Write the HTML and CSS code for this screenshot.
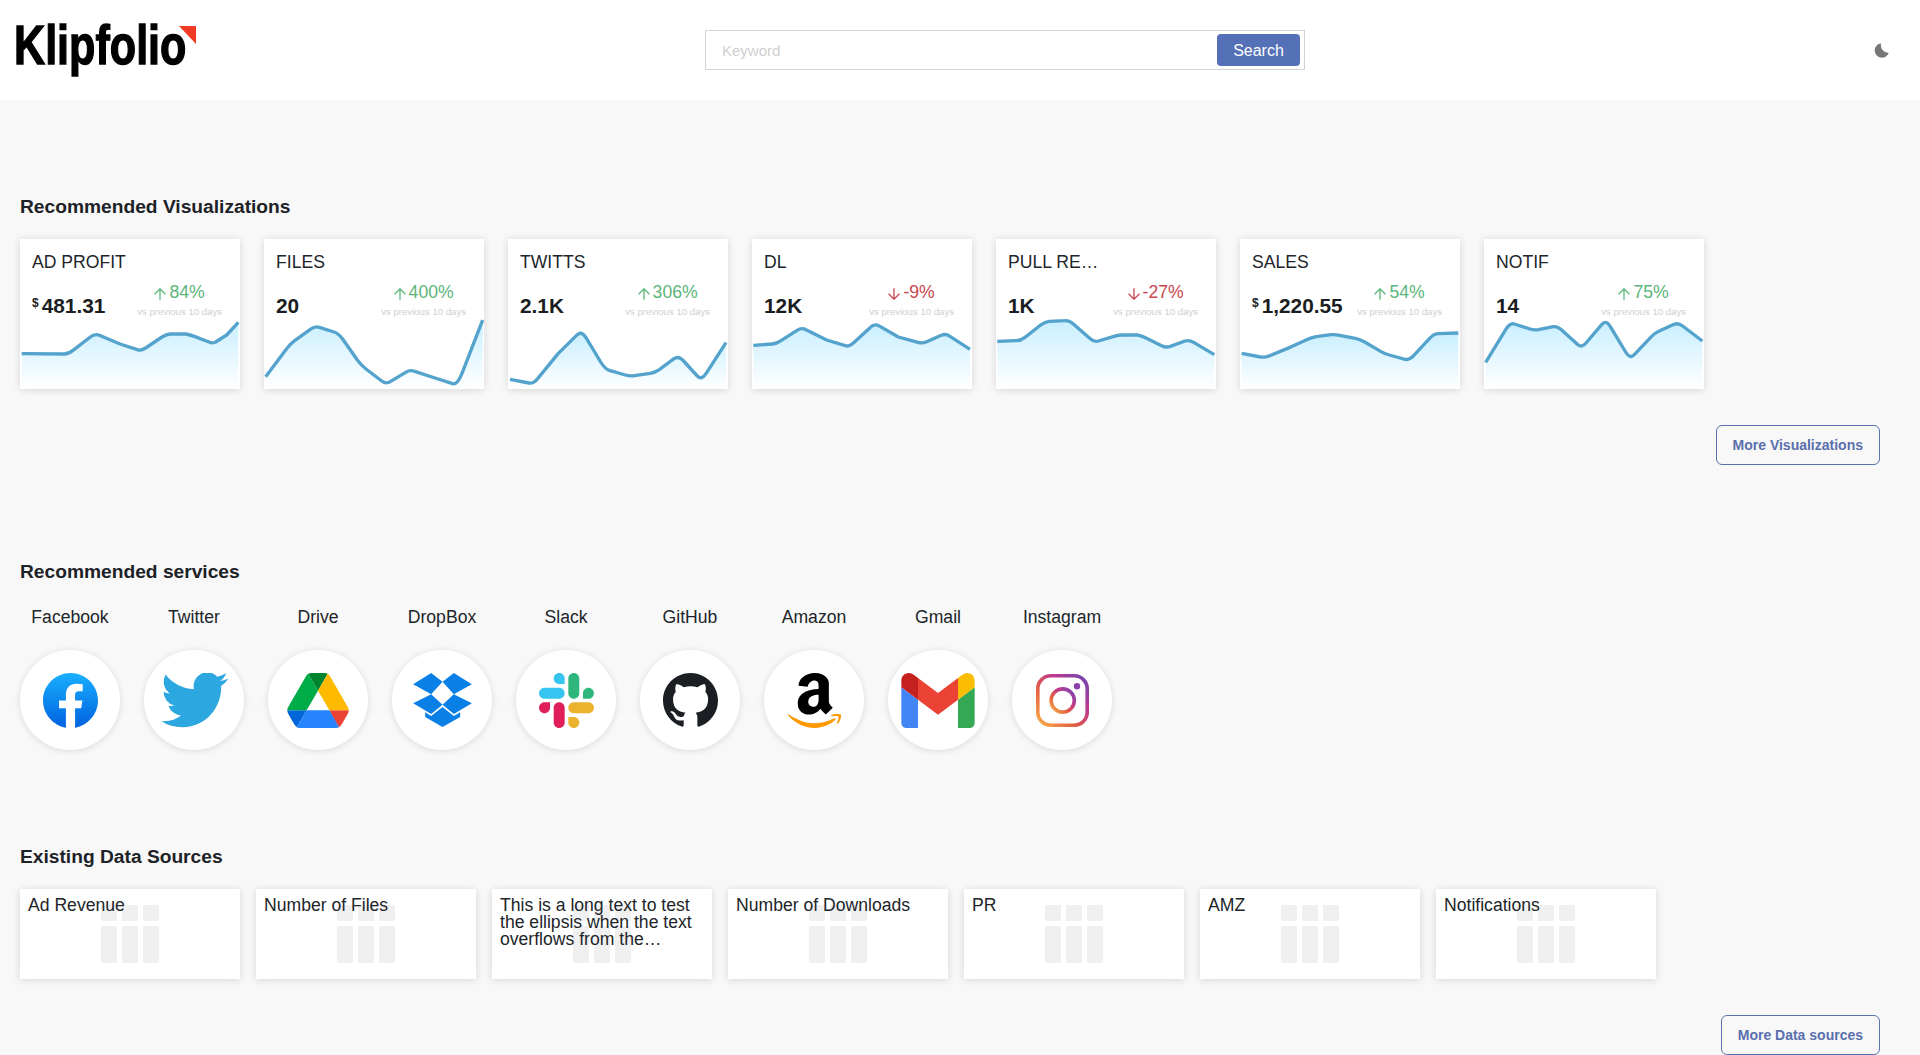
FILE: index.html
```html
<!DOCTYPE html>
<html lang="en">
<head>
<meta charset="utf-8">
<title>Klipfolio</title>
<link rel="stylesheet" href="styles.css">
</head>
<body>
<svg class="defs" width="0" height="0" aria-hidden="true">
  <defs>
    <linearGradient id="area" x1="0" y1="0" x2="0" y2="1">
      <stop offset="0" stop-color="#c9efff"/>
      <stop offset="1" stop-color="#ffffff"/>
    </linearGradient>
    <linearGradient id="fb" x1="0" y1="0" x2="0" y2="1">
      <stop offset="0" stop-color="#19afff"/>
      <stop offset="1" stop-color="#0062e0"/>
    </linearGradient>
    <linearGradient id="ig" x1="0" y1="1" x2="1" y2="0">
      <stop offset="0" stop-color="#f7b24a"/>
      <stop offset=".35" stop-color="#e5603f"/>
      <stop offset=".65" stop-color="#bf3a8c"/>
      <stop offset="1" stop-color="#6f45b5"/>
    </linearGradient>
    <symbol id="up" viewBox="0 0 12 12"><path d="M6 11.800V.8M.6 6.200 6 .8l5.400 5.400" fill="none" stroke="currentColor" stroke-width="1.300"/></symbol>
    <symbol id="down" viewBox="0 0 12 12"><path d="M6 .2V11.200M.6 5.800 6 11.200l5.400-5.400" fill="none" stroke="currentColor" stroke-width="1.300"/></symbol>
    <symbol id="bars" viewBox="0 0 58 58">
      <rect x="0" width="16" height="16" rx="1"/><rect x="21" width="16" height="16" rx="1"/><rect x="42" width="16" height="16" rx="1"/>
      <rect x="0" y="21" width="16" height="37" rx="1"/><rect x="21" y="21" width="16" height="37" rx="1"/><rect x="42" y="21" width="16" height="37" rx="1"/>
    </symbol>
  </defs>
</svg>

<header class="topbar">
  <a class="logo"><span class="logo-text">Klipfolio</span><svg class="logo-mark" viewBox="0 0 17 18"><path d="M0 0h17v18z"/></svg></a>
  <form class="search">
    <input class="search-input" type="text" placeholder="Keyword">
    <button class="search-btn" type="button">Search</button>
  </form>
  <svg class="moon" viewBox="0 0 16 16"><path d="M7.500.3A7.700 7.700 0 1 0 15.700 10.600 8.500 8.500 0 0 1 7.500.3z"/></svg>
</header>

<main class="page">
  <section class="section">
    <h2 class="section-title">Recommended Visualizations</h2>
    <div class="viz-row">
      <article class="viz-card">
        <svg class="spark" viewBox="60 147 660 450"><path class="spark-area" d="M65 491L193 492Q205 492 219 481L271 441Q285 430 298 436L360 462 412 479Q423 483 437 474L486 441Q500 432 513 432L557 432Q570 434 583 439L627 456Q640 461 647 456L680 435 715 397V597H65z"/><path class="spark-line" d="M65 491L193 492Q205 492 219 481L271 441Q285 430 298 436L360 462 412 479Q423 483 437 474L486 441Q500 432 513 432L557 432Q570 434 583 439L627 456Q640 461 647 456L680 435 715 397"/></svg>
        <h3 class="viz-title">AD PROFIT</h3>
        <div class="viz-row-data">
          <div class="viz-value"><sup class="cur">$</sup>481.31</div>
          <div class="viz-delta"><div class="delta up"><svg class="arrow"><use href="#up"/></svg>84%</div><div class="vs">vs previous 10 days</div></div>
        </div>
      </article>
      <article class="viz-card">
        <svg class="spark" viewBox="792 147 660 450"><path class="spark-area" d="M797 560L857 480Q870 462 884 452L931 418Q945 408 958 412L1002 426Q1015 430 1028 447L1072 510Q1085 527 1098 537L1145 573Q1158 583 1171 575L1217 547Q1230 539 1244 544L1305 564 1358 581Q1372 585 1386 550L1448 390V597H797z"/><path class="spark-line" d="M797 560L857 480Q870 462 884 452L931 418Q945 408 958 412L1002 426Q1015 430 1028 447L1072 510Q1085 527 1098 537L1145 573Q1158 583 1171 575L1217 547Q1230 539 1244 544L1305 564 1358 581Q1372 585 1386 550L1448 390"/></svg>
        <h3 class="viz-title">FILES</h3>
        <div class="viz-row-data">
          <div class="viz-value">20</div>
          <div class="viz-delta"><div class="delta up"><svg class="arrow"><use href="#up"/></svg>400%</div><div class="vs">vs previous 10 days</div></div>
        </div>
      </article>
      <article class="viz-card">
        <svg class="spark" viewBox="54 147 660 450"><path class="spark-area" d="M60 568L117 579Q130 582 143 566L205 490 262 434Q275 422 288 443L332 516Q345 537 358 541L406 555Q420 559 433 557L481 550Q495 548 508 539L552 506Q565 497 578 510L622 558Q635 571 648 551L708 458V597H60z"/><path class="spark-line" d="M60 568L117 579Q130 582 143 566L205 490 262 434Q275 422 288 443L332 516Q345 537 358 541L406 555Q420 559 433 557L481 550Q495 548 508 539L552 506Q565 497 578 510L622 558Q635 571 648 551L708 458"/></svg>
        <h3 class="viz-title">TWITTS</h3>
        <div class="viz-row-data">
          <div class="viz-value">2.1K</div>
          <div class="viz-delta"><div class="delta up"><svg class="arrow"><use href="#up"/></svg>306%</div><div class="vs">vs previous 10 days</div></div>
        </div>
      </article>
      <article class="viz-card">
        <svg class="spark" viewBox="786 147 660 450"><path class="spark-area" d="M790 466L847 462Q860 461 873 452L921 421Q935 412 948 419L1010 450 1066 467Q1078 471 1091 458L1140 413Q1153 400 1166 407L1225 441 1284 457Q1297 461 1310 455L1354 436Q1367 430 1380 439L1440 478V597H790z"/><path class="spark-line" d="M790 466L847 462Q860 461 873 452L921 421Q935 412 948 419L1010 450 1066 467Q1078 471 1091 458L1140 413Q1153 400 1166 407L1225 441 1284 457Q1297 461 1310 455L1354 436Q1367 430 1380 439L1440 478"/></svg>
        <h3 class="viz-title">DL</h3>
        <div class="viz-row-data">
          <div class="viz-value">12K</div>
          <div class="viz-delta"><div class="delta down"><svg class="arrow"><use href="#down"/></svg>-9%</div><div class="vs">vs previous 10 days</div></div>
        </div>
      </article>
      <article class="viz-card">
        <svg class="spark" viewBox="48 147 660 450"><path class="spark-area" d="M52 454L109 452Q122 452 135 442L182 405Q195 395 208 394L255 392Q268 391 281 403L329 445Q342 457 355 453L402 439Q415 435 428 435L472 435Q485 437 498 444L545 467Q558 474 571 469L615 453Q628 449 641 457L703 494V597H52z"/><path class="spark-line" d="M52 454L109 452Q122 452 135 442L182 405Q195 395 208 394L255 392Q268 391 281 403L329 445Q342 457 355 453L402 439Q415 435 428 435L472 435Q485 437 498 444L545 467Q558 474 571 469L615 453Q628 449 641 457L703 494"/></svg>
        <h3 class="viz-title">PULL RE…</h3>
        <div class="viz-row-data">
          <div class="viz-value">1K</div>
          <div class="viz-delta"><div class="delta down"><svg class="arrow"><use href="#down"/></svg>-27%</div><div class="vs">vs previous 10 days</div></div>
        </div>
      </article>
      <article class="viz-card">
        <svg class="spark" viewBox="780 147 660 450"><path class="spark-area" d="M785 490L842 501Q855 503 869 497L930 472 990 445Q1003 440 1014 439L1054 434Q1065 433 1079 436L1126 445Q1140 448 1154 456L1202 484Q1215 492 1228 495L1275 508Q1288 511 1301 497L1349 445Q1362 431 1375 431L1435 429V597H785z"/><path class="spark-line" d="M785 490L842 501Q855 503 869 497L930 472 990 445Q1003 440 1014 439L1054 434Q1065 433 1079 436L1126 445Q1140 448 1154 456L1202 484Q1215 492 1228 495L1275 508Q1288 511 1301 497L1349 445Q1362 431 1375 431L1435 429"/></svg>
        <h3 class="viz-title">SALES</h3>
        <div class="viz-row-data">
          <div class="viz-value"><sup class="cur">$</sup>1,220.55</div>
          <div class="viz-delta"><div class="delta up"><svg class="arrow"><use href="#up"/></svg>54%</div><div class="vs">vs previous 10 days</div></div>
        </div>
      </article>
      <article class="viz-card">
        <svg class="spark" viewBox="12 627 660 450"><path class="spark-area" d="M17 997L77 899Q90 878 103 882L150 897Q163 901 175 899L220 890Q232 888 245 900L292 943Q305 955 318 939L365 884Q378 868 391 890L437 966Q450 988 463 974L512 922Q525 908 538 903L582 883Q595 878 608 888L667 933V1077H17z"/><path class="spark-line" d="M17 997L77 899Q90 878 103 882L150 897Q163 901 175 899L220 890Q232 888 245 900L292 943Q305 955 318 939L365 884Q378 868 391 890L437 966Q450 988 463 974L512 922Q525 908 538 903L582 883Q595 878 608 888L667 933"/></svg>
        <h3 class="viz-title">NOTIF</h3>
        <div class="viz-row-data">
          <div class="viz-value">14</div>
          <div class="viz-delta"><div class="delta up"><svg class="arrow"><use href="#up"/></svg>75%</div><div class="vs">vs previous 10 days</div></div>
        </div>
      </article>
    </div>
    <div class="more"><button class="more-btn" type="button">More Visualizations</button></div>
  </section>

  <section class="section">
    <h2 class="section-title">Recommended services</h2>
    <div class="service-row">
      <div class="service">
        <div class="service-name">Facebook</div>
        <div class="service-disc">
          <svg class="svc-fb" viewBox="0 0 36 36"><path fill="url(#fb)" d="M15 35.800C6.500 34.300 0 26.900 0 18 0 8.100 8.100 0 18 0s18 8.100 18 18c0 8.900-6.500 16.300-15 17.800l-1-.8h-4l-1 .8z"/><path fill="#fff" d="M25 23l.8-5H21v-3.500c0-1.400.5-2.500 2.700-2.500H26V7.400c-1.300-.2-2.700-.4-4-.4-4.100 0-7 2.500-7 7v4h-4.500v5H15v12.700c1 .2 2 .3 3 .3s2-.1 3-.3V23h4z"/></svg>
        </div>
      </div>
      <div class="service">
        <div class="service-name">Twitter</div>
        <div class="service-disc">
          <svg class="svc-tw" viewBox="0 2.500 24 19.500" preserveAspectRatio="none"><path fill="#2ca7e0" d="M23.953 4.570a10 10 0 01-2.825.775 4.958 4.958 0 002.163-2.723c-.951.555-2.005.959-3.127 1.184a4.920 4.920 0 00-8.384 4.482C7.690 8.095 4.067 6.130 1.640 3.162a4.822 4.822 0 00-.666 2.475c0 1.710.870 3.213 2.188 4.096a4.904 4.904 0 01-2.228-.616v.060a4.923 4.923 0 003.946 4.827 4.996 4.996 0 01-2.212.085 4.936 4.936 0 004.604 3.417 9.867 9.867 0 01-6.102 2.105c-.390 0-.779-.023-1.170-.067a13.995 13.995 0 007.557 2.209c9.053 0 13.998-7.496 13.998-13.985 0-.210 0-.420-.015-.630A9.935 9.935 0 0024 4.590z"/></svg>
        </div>
      </div>
      <div class="service">
        <div class="service-name">Drive</div>
        <div class="service-disc">
          <svg class="svc-drive" viewBox="0 0 87.300 78"><path d="m6.600 66.850 3.850 6.650c.8 1.400 1.950 2.500 3.300 3.300l13.750-23.800h-27.500c0 1.550.4 3.100 1.200 4.500z" fill="#0066da"/><path d="m43.650 25-13.750-23.800c-1.350.8-2.500 1.900-3.300 3.300l-25.400 44a9.060 9.060 0 0 0 -1.200 4.500h27.500z" fill="#00ac47"/><path d="m73.550 76.800c1.350-.8 2.500-1.900 3.300-3.300l1.600-2.750 7.650-13.250c.8-1.400 1.200-2.950 1.200-4.500h-27.502l5.852 11.500z" fill="#ea4335"/><path d="m43.650 25 13.750-23.800c-1.350-.8-2.900-1.200-4.500-1.200h-18.500c-1.600 0-3.150.45-4.500 1.200z" fill="#00832d"/><path d="m59.800 53h-32.300l-13.750 23.800c1.350.8 2.900 1.200 4.500 1.200h50.800c1.600 0 3.150-.45 4.500-1.200z" fill="#2684fc"/><path d="m73.400 26.500-12.700-22c-.8-1.400-1.950-2.500-3.300-3.300l-13.750 23.800 16.150 28h27.450c0-1.550-.4-3.100-1.200-4.500z" fill="#ffba00"/></svg>
        </div>
      </div>
      <div class="service">
        <div class="service-name">DropBox</div>
        <div class="service-disc">
          <svg class="svc-dropbox" viewBox="97 249 176 162"><path fill="#0a7fe6" d="M151 249L97 283l54 30 34-38zM219 249l-34 26 34 38 54-30zM97 340l54 32 34-28-34-31zM219 313l-34 31 34 28 54-32zM133 367l18 11 34-27 34 27 19-11v14l-53 30-52-30z"/></svg>
        </div>
      </div>
      <div class="service">
        <div class="service-name">Slack</div>
        <div class="service-disc">
          <svg class="svc-slack" viewBox="0 0 2447.600 2452.500"><path d="m897.400 0c-135.300.1-244.800 109.900-244.700 245.200-.1 135.300 109.500 245.100 244.800 245.200h244.800v-245.100c.1-135.300-109.500-245.100-244.900-245.300m0 654h-652.600c-135.300.1-244.900 109.900-244.800 245.200-.2 135.300 109.400 245.100 244.700 245.300h652.700c135.300-.1 244.900-109.900 244.800-245.200.1-135.400-109.500-245.200-244.800-245.300z" fill="#36c5f0"/><path d="m2447.600 899.200c.1-135.300-109.500-245.100-244.800-245.200-135.300.1-244.900 109.900-244.800 245.200v245.300h244.800c135.300-.1 244.900-109.900 244.800-245.300zm-652.700 0v-654c.1-135.200-109.400-245-244.700-245.200-135.300.1-244.900 109.900-244.800 245.200v654c-.2 135.300 109.400 245.100 244.700 245.300 135.300-.1 244.900-109.900 244.800-245.300z" fill="#2eb67d"/><path d="m1550.100 2452.500c135.300-.1 244.900-109.900 244.800-245.200.1-135.300-109.500-245.100-244.800-245.200h-244.800v245.200c-.1 135.200 109.500 245 244.800 245.200zm0-654.100h652.700c135.300-.1 244.900-109.900 244.800-245.200.2-135.300-109.400-245.100-244.700-245.300h-652.700c-135.300.1-244.900 109.900-244.800 245.200-.1 135.400 109.400 245.200 244.700 245.300z" fill="#ecb22e"/><path d="m0 1553.200c-.1 135.300 109.500 245.100 244.800 245.200 135.300-.1 244.900-109.900 244.800-245.200v-245.200h-244.800c-135.300.1-244.900 109.900-244.800 245.200zm652.700 0v654c-.2 135.300 109.400 245.100 244.700 245.300 135.300-.1 244.900-109.900 244.800-245.200v-653.900c.2-135.300-109.400-245.100-244.700-245.300-135.400 0-244.800 109.800-244.800 245.100z" fill="#e01e5a"/></svg>
        </div>
      </div>
      <div class="service">
        <div class="service-name">GitHub</div>
        <div class="service-disc">
          <svg class="svc-gh" viewBox="0 0 16 16"><path fill="#1b1f23" fill-rule="evenodd" d="M8 0C3.580 0 0 3.580 0 8c0 3.540 2.290 6.530 5.470 7.590.4.070.55-.170.55-.380 0-.190-.010-.820-.010-1.490-2.010.370-2.530-.490-2.690-.940-.090-.230-.480-.940-.820-1.130-.280-.150-.680-.520-.010-.530.630-.010 1.080.580 1.230.820.720 1.210 1.870.870 2.330.660.070-.520.280-.870.510-1.070-1.780-.2-3.640-.890-3.640-3.950 0-.870.310-1.590.820-2.150-.080-.2-.360-1.020.080-2.120 0 0 .670-.210 2.200.820.640-.180 1.320-.270 2-.270.680 0 1.360.090 2 .270 1.530-1.040 2.200-.820 2.200-.820.440 1.100.160 1.920.080 2.120.510.560.820 1.270.820 2.150 0 3.070-1.870 3.750-3.650 3.950.290.250.540.730.540 1.480 0 1.070-.010 1.930-.010 2.200 0 .210.150.460.550.380A8.013 8.013 0 0016 8c0-4.420-3.580-8-8-8z"/></svg>
        </div>
      </div>
      <div class="service">
        <div class="service-name">Amazon</div>
        <div class="service-disc">
          <svg class="svc-amz" viewBox="9 32 430 448"><path fill="#000" d="M257.200 162.700c-48.700 1.800-169.500 15.500-169.500 117.500 0 109.500 138.300 114 183.500 43.200 6.500 10.200 35.400 37.500 45.300 46.800l56.800-56S341 288.900 341 261.400V114.300C341 89 316.500 32 228.700 32 140.700 32 94 87 94 136.300l73.500 6.800c16.300-49.500 54.200-49.500 54.200-49.500 40.700-.1 35.500 29.800 35.500 69.100zm0 86.800c0 80-84.200 68-84.200 17.200 0-47.200 50.500-56.700 84.200-57.800v40.600z"/><path fill="#f90" d="M393.200 413c-7.700 10-70 67-174.500 67S34.200 408.500 9.700 379c-6.800-7.700 1-11.300 5.500-8.300C88.500 415.200 203 488.500 387.700 401c7.500-3.700 13.300 2 5.500 12zM433 415.200c-6.500 15.800-16 26.800-21.200 31-5.500 4.500-9.500 2.700-6.500-3.800s19.300-46.500 12.700-55c-6.500-8.300-37-4.300-48-3.200-10.800 1-13 2-14-.3-2.300-5.700 21.700-15.500 37.500-17.500 15.700-1.800 41-.8 46 5.700 3.700 5.100 0 27.100-6.500 43.100z"/></svg>
        </div>
      </div>
      <div class="service">
        <div class="service-name">Gmail</div>
        <div class="service-disc">
          <svg class="svc-gmail" viewBox="52 42 88 66"><path fill="#4285f4" d="M58 108h14V74L52 59v43c0 3.320 2.690 6 6 6"/><path fill="#34a853" d="M120 108h14c3.320 0 6-2.690 6-6V59l-20 15"/><path fill="#fbbc04" d="M120 48v26l20-15v-8c0-7.420-8.470-11.650-14.400-7.200"/><path fill="#ea4335" d="M72 74V48l24 18 24-18v26L96 92"/><path fill="#c5221f" d="M52 51v8l20 15V48l-5.600-4.200c-5.940-4.450-14.400-.22-14.400 7.200"/></svg>
        </div>
      </div>
      <div class="service">
        <div class="service-name">Instagram</div>
        <div class="service-disc">
          <svg class="svc-ig" viewBox="0 0 53 53"><rect x="1.800" y="1.800" width="49.400" height="49.400" rx="13" fill="none" stroke="url(#ig)" stroke-width="3.600"/><circle cx="26.700" cy="26.500" r="11.600" fill="none" stroke="url(#ig)" stroke-width="3.600"/><circle cx="41" cy="12.300" r="3.200" fill="#8a44a8"/></svg>
        </div>
      </div>
    </div>
  </section>

  <section class="section">
    <h2 class="section-title">Existing Data Sources</h2>
    <div class="source-row">
      <article class="source-card"><svg class="source-icon"><use href="#bars"/></svg><div class="source-name">Ad Revenue</div></article>
      <article class="source-card"><svg class="source-icon"><use href="#bars"/></svg><div class="source-name">Number of Files</div></article>
      <article class="source-card"><svg class="source-icon"><use href="#bars"/></svg><div class="source-name">This is a long text to test the ellipsis when the text overflows from the…</div></article>
      <article class="source-card"><svg class="source-icon"><use href="#bars"/></svg><div class="source-name">Number of Downloads</div></article>
      <article class="source-card"><svg class="source-icon"><use href="#bars"/></svg><div class="source-name">PR</div></article>
      <article class="source-card"><svg class="source-icon"><use href="#bars"/></svg><div class="source-name">AMZ</div></article>
      <article class="source-card"><svg class="source-icon"><use href="#bars"/></svg><div class="source-name">Notifications</div></article>
    </div>
    <div class="more"><button class="more-btn" type="button">More Data sources</button></div>
  </section>
</main>
</body>
</html>
```

FILE: styles.css
```css
* { box-sizing: border-box; }

html, body {
  margin: 0;
  height: 1055px;
  overflow: hidden;
}

body {
  background: #f8f8f8;
  color: #212529;
  font-family: "Liberation Sans", Arial, sans-serif;
  font-size: 17.6px;
}

.defs { display: block; height: 0; }

/* Header */
.topbar {
  display: flex;
  align-items: center;
  height: 100px;
  padding: 0 31px 0 16px;
  background: #fff;
}

.logo {
  display: flex;
  align-items: flex-start;
  width: 180px;
  height: 52px;
  flex: none;
  color: #000;
}

.logo-text {
  display: inline-block;
  flex: none;
  width: 170px;
  margin-left: -2px;
  font-size: 56px;
  font-weight: 700;
  line-height: 41px;
  white-space: nowrap;
  transform: scaleX(.77);
  transform-origin: 0 0;
  -webkit-text-stroke: 1.4px #000;
}

.logo-mark {
  flex: none;
  width: 17px;
  height: 18px;
  margin-left: -5px;
  margin-top: 2px;
  fill: #ef3a25;
}

.search {
  display: flex;
  align-items: center;
  width: 600px;
  height: 40px;
  margin-left: 509px;
  padding: 0 4px 0 16px;
  background: #fff;
  border: 1px solid #d3d3d3;
}

.search-input {
  flex: 1;
  min-width: 0;
  border: 0;
  outline: 0;
  padding: 0;
  background: transparent;
  font: 15px "Liberation Sans", Arial, sans-serif;
}

.search-input::placeholder { color: #d0d0d0; opacity: 1; }

.search-btn {
  width: 83px;
  height: 32px;
  padding: 1px 0 0;
  border: 0;
  border-radius: 4px;
  background: #5470b6;
  color: #fff;
  font: 16px "Liberation Sans", Arial, sans-serif;
}

.moon {
  width: 15px;
  height: 15px;
  margin-left: auto;
  fill: #777;
}

/* Sections */
.page { padding: 0 40px 0 20px; }

.section { margin-top: 95px; }

.section-title {
  margin: 0 0 20px;
  font-size: 19.2px;
  line-height: 24px;
  font-weight: 700;
  color: #1d2227;
}

/* Visualisation cards */
.viz-row {
  display: flex;
  gap: 24px;
}

.viz-card {
  position: relative;
  width: 220px;
  height: 150px;
  padding: 12px 18px 0 12px;
  background: #fff;
  box-shadow: 0 1px 8px rgba(0, 0, 0, .14);
}

.spark {
  position: absolute;
  inset: 0;
  width: 220px;
  height: 150px;
}

.spark-area { fill: url(#area); }

.spark-line {
  fill: none;
  stroke: #54a3cd;
  stroke-width: 10;
  stroke-linejoin: round;
}

.viz-title {
  position: relative;
  margin: 0;
  font-size: 17.6px;
  line-height: 22px;
  font-weight: 400;
  white-space: nowrap;
}

.viz-row-data {
  position: relative;
  display: flex;
  justify-content: space-between;
  align-items: flex-end;
  margin-top: 8px;
}

.viz-value {
  font-size: 20.8px;
  line-height: 24px;
  font-weight: 700;
  color: #1a1d21;
  white-space: nowrap;
}

.cur {
  display: inline-block;
  margin-right: 3px;
  font-size: 12px;
  line-height: 12px;
  vertical-align: 6px;
}

.viz-delta { text-align: center; }

.delta {
  display: flex;
  justify-content: center;
  align-items: center;
  gap: 3px;
  font-size: 17.6px;
  line-height: 22px;
}

.delta.up { color: #5cb57b; }
.delta.down { color: #c9464f; }

.arrow {
  width: 12px;
  height: 12px;
  margin-top: 4px;
  flex: none;
}

.vs {
  margin-top: 3px;
  font-size: 9.6px;
  line-height: 12px;
  color: #cfcfcf;
  white-space: nowrap;
}

.more {
  display: flex;
  justify-content: flex-end;
  margin-top: 36px;
}

.more-btn {
  height: 40px;
  padding: 0 16px;
  border: 1px solid #5a73ad;
  border-radius: 6px;
  background: transparent;
  color: #5a6fad;
  font: 700 14px "Liberation Sans", Arial, sans-serif;
}

/* Services */
.service-row {
  display: flex;
  gap: 24px;
}

.service {
  width: 100px;
  text-align: center;
}

.service-name {
  line-height: 22px;
  margin: 2px 0 22px;
}

.service-disc {
  display: flex;
  justify-content: center;
  align-items: center;
  width: 100px;
  height: 100px;
  border-radius: 50%;
  background: #fff;
  box-shadow: 0 1px 7px rgba(0, 0, 0, .12);
}

.svc-fb, .svc-slack, .svc-gh { width: 55px; height: 55px; }
.svc-tw { width: 67px; height: 55px; }
.svc-drive { width: 62px; height: 55px; }
.svc-dropbox { width: 59px; height: 54px; }
.svc-amz { width: 53px; height: 55px; }
.svc-gmail { width: 74px; height: 55px; }
.svc-ig { width: 53px; height: 53px; }

/* Data sources */
.source-row {
  display: flex;
  gap: 16px;
}

.source-card {
  display: grid;
  width: 220px;
  height: 90px;
  padding: 8px;
  background: #fff;
  box-shadow: 0 1px 8px rgba(0, 0, 0, .14);
}

.source-icon {
  grid-area: 1 / 1;
  justify-self: center;
  width: 58px;
  height: 58px;
  margin-top: 8px;
  fill: #f0f0f0;
}

.source-name {
  grid-area: 1 / 1;
  line-height: 17px;
}
```
